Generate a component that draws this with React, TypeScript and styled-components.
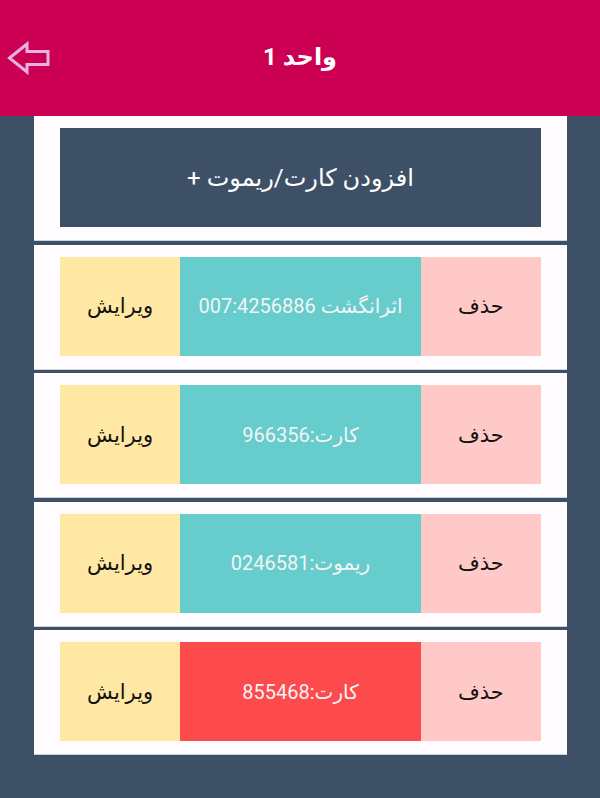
import React from 'react'
import styled, { createGlobalStyle } from 'styled-components'

type Status = 'ok' | 'error'

interface Entry {
    id: number,
    label: string,
    status: Status
}

const entries: Entry[] = [
    { id: 1, label: 'اثرانگشت 007:4256886', status: 'ok' },
    { id: 2, label: 'کارت:966356', status: 'ok' },
    { id: 3, label: 'ریموت:0246581', status: 'ok' },
    { id: 4, label: 'کارت:855468', status: 'error' },
]

const GlobalStyle = createGlobalStyle`
    html, body {
        margin: 0;
        padding: 0;
        background: #3d5066;
        font-family: Roboto, "DejaVu Sans", sans-serif;
    }
`

const BackArrow = () => (
    <svg width="44" height="34" viewBox="0 0 44 34" fill="none">
        <path
            d="M2.5 17 L20 3 L20 10.5 L41 10.5 L41 23.5 L20 23.5 L20 31 Z"
            stroke="#e8b2e2"
            strokeWidth="3"
            strokeLinejoin="miter"
        />
    </svg>
)

const EntryRow = ({ label, status }: Entry) => (
    <Card>
        <Actions>
            <Cell tone="pink" dark>حذف</Cell>
            <Cell tone={status === 'error' ? 'red' : 'teal'} wide>{label}</Cell>
            <Cell tone="yellow" dark>ویرایش</Cell>
        </Actions>
    </Card>
)

export default function App() {
    return (
        <Page>
            <GlobalStyle />
            <Header>
                <BackButton aria-label="back">
                    <BackArrow />
                </BackButton>
                <Title dir="rtl">واحد 1</Title>
                <span />
            </Header>
            <List>
                <Card>
                    <AddButton dir="rtl">افزودن کارت/ریموت +</AddButton>
                </Card>
                {entries.map(e => <EntryRow key={e.id} {...e} />)}
            </List>
        </Page>
    )
}

const Page = styled.div`
    min-height: 798px;
    background: #3d5066;
`

const Header = styled.header`
    height: 116px;
    background: #cc0052;
    display: grid;
    grid-template-columns: 60px 1fr 60px;
    align-items: center;
`

const BackButton = styled.button`
    border: none;
    background: none;
    padding: 0 0 0 7px;
    display: flex;
    align-items: center;
    cursor: pointer;
`

const Title = styled.h1`
    margin: 0 0 2px;
    text-align: center;
    color: #fff;
    font-size: 24px;
    font-weight: 700;
`

const List = styled.div`
    width: 533px;
    margin-left: 34px;
    display: flex;
    flex-direction: column;
    gap: 3.5px;
`

const Card = styled.div`
    background: #fefcff;
    height: 125px;
    box-sizing: border-box;
    padding: 12px 26px 13px;
    border-bottom: 1px solid #c9d3de;
`

const AddButton = styled.button`
    width: 100%;
    height: 100%;
    border: none;
    background: #3d5066;
    color: #fff;
    font-family: Roboto, "DejaVu Sans", sans-serif;
    font-size: 24px;
    cursor: pointer;
`

const Actions = styled.div`
    direction: rtl;
    height: 100%;
    display: grid;
    grid-template-columns: 1fr 2fr 1fr;
`

const tones = {
    pink: '#ffc9c7',
    teal: '#66cccc',
    red: '#fc4a4d',
    yellow: '#ffe8a3',
}

const Cell = styled.div<{ tone: keyof typeof tones, dark?: boolean, wide?: boolean }>`
    background: ${p => tones[p.tone]};
    color: ${p => (p.dark ? '#111' : '#f4f4f4')};
    display: flex;
    align-items: center;
    justify-content: center;
    font-size: ${p => (p.wide ? '20px' : '21px')};
    cursor: pointer;
`
